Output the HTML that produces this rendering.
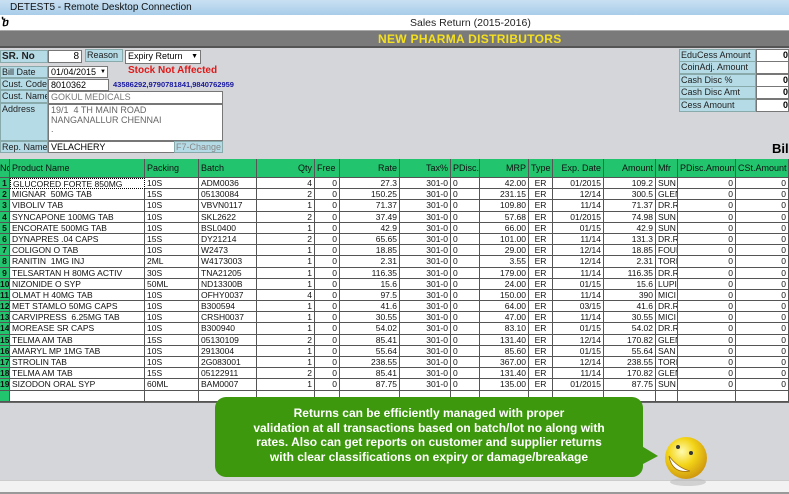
<!DOCTYPE html>
<html><head><style>
*{margin:0;padding:0;box-sizing:border-box}
body{width:789px;height:494px;overflow:hidden;background:#d4d6da;font-family:"Liberation Sans",sans-serif;position:relative;font-size:9px}
.a{position:absolute}
.lb{position:absolute;background:#b5dbe6;border:1px solid #8aa;color:#222;font-size:9px;padding-left:1px;line-height:11px;white-space:nowrap;overflow:hidden}
.in{position:absolute;background:#fff;border:1px solid #777;font-size:9px;padding-left:2px;line-height:11px;white-space:nowrap;overflow:hidden}
.g{position:absolute;left:0;top:159px;width:789px;display:grid;grid-template-columns:10px 135px 54px 58px 58px 25px 60px 51px 29px 49px 24px 51px 52px 22px 58px 53px;grid-template-rows:19px repeat(20,11.2px);background:#fff;border-bottom:1px solid #666}
.g div{border-right:1px solid #555;border-bottom:1px solid #555;font-size:8.5px;line-height:10px;white-space:nowrap;overflow:hidden;padding:0 2px;color:#111}
.g .h{background:#22c46e;line-height:18px;font-size:9px}
.g .n{background:#22c46e;padding:0;text-align:center;font-weight:bold}
.r{text-align:right}.c{text-align:center}
</style></head><body>
<div class="a" style="left:0;top:0;width:789px;height:15px;background:linear-gradient(#c9e0f2,#a8cde9);font-size:10px;line-height:15px;padding-left:10px;color:#111">DETEST5 - Remote Desktop Connection</div>
<div class="a" style="left:0;top:15px;width:789px;height:16px;background:#fff;border-bottom:1px solid #aaa"><span class="a" style="left:2px;top:1px;font-size:11px;font-weight:bold">ⴆ</span><span class="a" style="left:410px;top:2px;font-size:10.5px;color:#222">Sales Return (2015-2016)</span></div>
<div class="a" style="left:0;top:31px;width:789px;height:17px;background:#7a7a7a;border-bottom:2px solid #555"><span class="a" style="left:378px;top:1px;font-size:12px;font-weight:bold;color:#f5e020;letter-spacing:.3px">NEW PHARMA DISTRIBUTORS</span></div>

<div class="lb" style="left:0;top:50px;width:48px;height:13px;font-weight:bold;font-size:10px">SR. No</div>
<div class="in" style="left:48px;top:50px;width:34px;height:13px;text-align:right;padding-right:2px;font-size:10px">8</div>
<div class="lb" style="left:85px;top:49px;width:38px;height:13px">Reason</div>
<div class="in" style="left:125px;top:50px;width:76px;height:14px">Expiry Return<span class="a" style="right:2px;top:0;font-size:7px">▼</span></div>
<div class="lb" style="left:0;top:66px;width:48px;height:12px">Bill Date</div>
<div class="in" style="left:48px;top:66px;width:60px;height:12px">01/04/2015<span class="a" style="right:1px;top:0;font-size:6px">▼</span></div>
<div class="a" style="left:128px;top:65px;color:#e01818;font-weight:bold;font-size:10px">Stock Not Affected</div>
<div class="lb" style="left:0;top:78px;width:48px;height:12px">Cust. Code</div>
<div class="in" style="left:48px;top:79px;width:61px;height:12px">8010362</div>
<div class="a" style="left:113px;top:80px;color:#1818a0;font-weight:bold;font-size:7.5px">43586292,9790781841,9840762959</div>
<div class="lb" style="left:0;top:90px;width:48px;height:13px">Cust. Name</div>
<div class="in" style="left:48px;top:91px;width:175px;height:13px;color:#777">GOKUL MEDICALS</div>
<div class="lb" style="left:0;top:103px;width:48px;height:38px">Address</div>
<div class="in" style="left:48px;top:104px;width:175px;height:37px;color:#666;line-height:9.5px;padding-top:1px">19/1 &nbsp;4 TH MAIN ROAD<br>NANGANALLUR CHENNAI<br>.</div>
<div class="lb" style="left:0;top:141px;width:48px;height:12px">Rep. Name</div>
<div class="in" style="left:48px;top:141px;width:127px;height:12px">VELACHERY</div>
<div class="lb" style="left:174px;top:141px;width:49px;height:12px;color:#888">F7-Change</div>

<div class="lb" style="left:679px;top:49px;width:77px;height:13px">EduCess Amount</div><div class="in" style="left:756px;top:49px;width:33px;height:13px;text-align:right;font-weight:bold">0</div>
<div class="lb" style="left:679px;top:61px;width:77px;height:13px">CoinAdj. Amount</div><div class="in" style="left:756px;top:61px;width:33px;height:13px"></div>
<div class="lb" style="left:679px;top:74px;width:77px;height:13px">Cash Disc %</div><div class="in" style="left:756px;top:74px;width:33px;height:13px;text-align:right;font-weight:bold">0</div>
<div class="lb" style="left:679px;top:86px;width:77px;height:13px">Cash Disc Amt</div><div class="in" style="left:756px;top:86px;width:33px;height:13px;text-align:right;font-weight:bold">0</div>
<div class="lb" style="left:679px;top:99px;width:77px;height:13px">Cess Amount</div><div class="in" style="left:756px;top:99px;width:33px;height:13px;text-align:right;font-weight:bold">0</div>
<div class="a" style="left:772px;top:141px;font-size:13px;font-weight:bold">Bil</div>

<div class="g">
<div class="h" style="padding:0">No</div><div class="h">Product Name</div><div class="h">Packing</div><div class="h">Batch</div><div class="h r">Qty</div><div class="h">Free</div><div class="h r">Rate</div><div class="h r">Tax%</div><div class="h">PDisc.</div><div class="h r">MRP</div><div class="h">Type</div><div class="h r">Exp. Date</div><div class="h r">Amount</div><div class="h">Mfr</div><div class="h r">PDisc.Amount</div><div class="h r">CSt.Amount</div>
<div class="n">1</div><div style="border:1px dotted #000">GLUCORED FORTE 850MG</div><div>10S</div><div>ADM0036</div><div class="r">4</div><div class="r">0</div><div class="r">27.3</div><div class="r">301-0</div><div>0</div><div class="r">42.00</div><div class="c">ER</div><div class="r">01/2015</div><div class="r">109.2</div><div>SUN</div><div class="r">0</div><div class="r">0</div>
<div class="n">2</div><div>MIGNAR &nbsp;50MG TAB</div><div>15S</div><div>05130084</div><div class="r">2</div><div class="r">0</div><div class="r">150.25</div><div class="r">301-0</div><div>0</div><div class="r">231.15</div><div class="c">ER</div><div class="r">12/14</div><div class="r">300.5</div><div>GLEN</div><div class="r">0</div><div class="r">0</div>
<div class="n">3</div><div>VIBOLIV TAB</div><div>10S</div><div>VBVN0117</div><div class="r">1</div><div class="r">0</div><div class="r">71.37</div><div class="r">301-0</div><div>0</div><div class="r">109.80</div><div class="c">ER</div><div class="r">11/14</div><div class="r">71.37</div><div>DR.R</div><div class="r">0</div><div class="r">0</div>
<div class="n">4</div><div>SYNCAPONE 100MG TAB</div><div>10S</div><div>SKL2622</div><div class="r">2</div><div class="r">0</div><div class="r">37.49</div><div class="r">301-0</div><div>0</div><div class="r">57.68</div><div class="c">ER</div><div class="r">01/2015</div><div class="r">74.98</div><div>SUN</div><div class="r">0</div><div class="r">0</div>
<div class="n">5</div><div>ENCORATE 500MG TAB</div><div>10S</div><div>BSL0400</div><div class="r">1</div><div class="r">0</div><div class="r">42.9</div><div class="r">301-0</div><div>0</div><div class="r">66.00</div><div class="c">ER</div><div class="r">01/15</div><div class="r">42.9</div><div>SUN</div><div class="r">0</div><div class="r">0</div>
<div class="n">6</div><div>DYNAPRES .04 CAPS</div><div>15S</div><div>DY21214</div><div class="r">2</div><div class="r">0</div><div class="r">65.65</div><div class="r">301-0</div><div>0</div><div class="r">101.00</div><div class="c">ER</div><div class="r">11/14</div><div class="r">131.3</div><div>DR.R</div><div class="r">0</div><div class="r">0</div>
<div class="n">7</div><div>COLIGON O TAB</div><div>10S</div><div>W2473</div><div class="r">1</div><div class="r">0</div><div class="r">18.85</div><div class="r">301-0</div><div>0</div><div class="r">29.00</div><div class="c">ER</div><div class="r">12/14</div><div class="r">18.85</div><div>FOUR</div><div class="r">0</div><div class="r">0</div>
<div class="n">8</div><div>RANITIN &nbsp;1MG INJ</div><div>2ML</div><div>W4173003</div><div class="r">1</div><div class="r">0</div><div class="r">2.31</div><div class="r">301-0</div><div>0</div><div class="r">3.55</div><div class="c">ER</div><div class="r">12/14</div><div class="r">2.31</div><div>TORI</div><div class="r">0</div><div class="r">0</div>
<div class="n">9</div><div>TELSARTAN H 80MG ACTIV</div><div>30S</div><div>TNA21205</div><div class="r">1</div><div class="r">0</div><div class="r">116.35</div><div class="r">301-0</div><div>0</div><div class="r">179.00</div><div class="c">ER</div><div class="r">11/14</div><div class="r">116.35</div><div>DR.R</div><div class="r">0</div><div class="r">0</div>
<div class="n">10</div><div>NIZONIDE O SYP</div><div>50ML</div><div>ND13300B</div><div class="r">1</div><div class="r">0</div><div class="r">15.6</div><div class="r">301-0</div><div>0</div><div class="r">24.00</div><div class="c">ER</div><div class="r">01/15</div><div class="r">15.6</div><div>LUPI</div><div class="r">0</div><div class="r">0</div>
<div class="n">11</div><div>OLMAT H 40MG TAB</div><div>10S</div><div>OFHY0037</div><div class="r">4</div><div class="r">0</div><div class="r">97.5</div><div class="r">301-0</div><div>0</div><div class="r">150.00</div><div class="c">ER</div><div class="r">11/14</div><div class="r">390</div><div>MICI</div><div class="r">0</div><div class="r">0</div>
<div class="n">12</div><div>MET STAMLO 50MG CAPS</div><div>10S</div><div>B300594</div><div class="r">1</div><div class="r">0</div><div class="r">41.6</div><div class="r">301-0</div><div>0</div><div class="r">64.00</div><div class="c">ER</div><div class="r">03/15</div><div class="r">41.6</div><div>DR.R</div><div class="r">0</div><div class="r">0</div>
<div class="n">13</div><div>CARVIPRESS &nbsp;6.25MG TAB</div><div>10S</div><div>CRSH0037</div><div class="r">1</div><div class="r">0</div><div class="r">30.55</div><div class="r">301-0</div><div>0</div><div class="r">47.00</div><div class="c">ER</div><div class="r">11/14</div><div class="r">30.55</div><div>MICI</div><div class="r">0</div><div class="r">0</div>
<div class="n">14</div><div>MOREASE SR CAPS</div><div>10S</div><div>B300940</div><div class="r">1</div><div class="r">0</div><div class="r">54.02</div><div class="r">301-0</div><div>0</div><div class="r">83.10</div><div class="c">ER</div><div class="r">01/15</div><div class="r">54.02</div><div>DR.R</div><div class="r">0</div><div class="r">0</div>
<div class="n">15</div><div>TELMA AM TAB</div><div>15S</div><div>05130109</div><div class="r">2</div><div class="r">0</div><div class="r">85.41</div><div class="r">301-0</div><div>0</div><div class="r">131.40</div><div class="c">ER</div><div class="r">12/14</div><div class="r">170.82</div><div>GLEN</div><div class="r">0</div><div class="r">0</div>
<div class="n">16</div><div>AMARYL MP 1MG TAB</div><div>10S</div><div>2913004</div><div class="r">1</div><div class="r">0</div><div class="r">55.64</div><div class="r">301-0</div><div>0</div><div class="r">85.60</div><div class="c">ER</div><div class="r">01/15</div><div class="r">55.64</div><div>SAN</div><div class="r">0</div><div class="r">0</div>
<div class="n">17</div><div>STROLIN TAB</div><div>10S</div><div>2G083001</div><div class="r">1</div><div class="r">0</div><div class="r">238.55</div><div class="r">301-0</div><div>0</div><div class="r">367.00</div><div class="c">ER</div><div class="r">12/14</div><div class="r">238.55</div><div>TORI</div><div class="r">0</div><div class="r">0</div>
<div class="n">18</div><div>TELMA AM TAB</div><div>15S</div><div>05122911</div><div class="r">2</div><div class="r">0</div><div class="r">85.41</div><div class="r">301-0</div><div>0</div><div class="r">131.40</div><div class="c">ER</div><div class="r">11/14</div><div class="r">170.82</div><div>GLEN</div><div class="r">0</div><div class="r">0</div>
<div class="n">19</div><div>SIZODON ORAL SYP</div><div>60ML</div><div>BAM0007</div><div class="r">1</div><div class="r">0</div><div class="r">87.75</div><div class="r">301-0</div><div>0</div><div class="r">135.00</div><div class="c">ER</div><div class="r">01/2015</div><div class="r">87.75</div><div>SUN</div><div class="r">0</div><div class="r">0</div>
<div class="n"></div><div></div><div></div><div></div><div></div><div></div><div></div><div></div><div></div><div></div><div></div><div></div><div></div><div></div><div></div><div></div>
</div>

<div class="a" style="left:0;top:480px;width:789px;height:12px;background:#f2f2f2;border-top:1px solid #ccc"></div>
<div class="a" style="left:0;top:492px;width:789px;height:2px;background:#999"></div>

<svg class="a" style="left:210px;top:394px" width="520" height="100">
<defs><radialGradient id="s" cx="40%" cy="35%" r="65%"><stop offset="0" stop-color="#fffbb0"/><stop offset=".5" stop-color="#f3d417"/><stop offset="1" stop-color="#d09a10"/></radialGradient></defs>
<path d="M415 42 L448 62 L433 70 Z" fill="#3e980e"/>
<rect x="5" y="3" width="428" height="80" rx="11" fill="#3e980e"/>
<ellipse cx="478" cy="88" rx="18" ry="4" fill="#bbb" opacity=".6"/>
<circle cx="476" cy="64" r="21" fill="url(#s)"/>
<circle cx="468" cy="53" r="2" fill="#333"/><circle cx="481" cy="59" r="2" fill="#333"/>
<path d="M459 62 Q462 80 480 77 Q468 74 459 62 Z" fill="#fff" stroke="#a07010" stroke-width=".8"/>
</svg>
<div class="a" style="left:215px;top:406px;width:428px;text-align:center;color:#fff;font-weight:bold;font-size:12px;line-height:14.5px">Returns can be efficiently managed with proper<br>validation at all transactions based on batch/lot no along with<br>rates. Also can get reports on customer and supplier returns<br>with clear classifications on expiry or damage/breakage</div>
</body></html>
